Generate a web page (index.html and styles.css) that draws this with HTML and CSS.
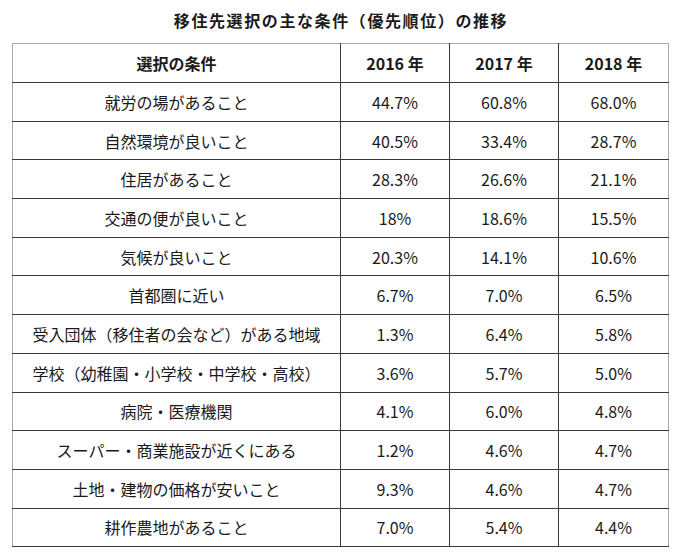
FILE: index.html
```html
<!DOCTYPE html>
<html lang="ja">
<head>
<meta charset="utf-8">
<link rel="stylesheet" href="styles.css">
</head>
<body>
<h1 class="title">移住先選択の主な条件（優先順位）の推移</h1>
<table class="tbl">
<colgroup><col class="c1"><col class="c2"><col class="c3"><col class="c4"></colgroup>
<thead>
<tr><th>選択の条件</th><th>2016 年</th><th>2017 年</th><th>2018 年</th></tr>
</thead>
<tbody>
<tr><td>就労の場があること</td><td>44.7%</td><td>60.8%</td><td>68.0%</td></tr>
<tr><td>自然環境が良いこと</td><td>40.5%</td><td>33.4%</td><td>28.7%</td></tr>
<tr><td>住居があること</td><td>28.3%</td><td>26.6%</td><td>21.1%</td></tr>
<tr><td>交通の便が良いこと</td><td>18%</td><td>18.6%</td><td>15.5%</td></tr>
<tr><td>気候が良いこと</td><td>20.3%</td><td>14.1%</td><td>10.6%</td></tr>
<tr><td>首都圏に近い</td><td>6.7%</td><td>7.0%</td><td>6.5%</td></tr>
<tr><td>受入団体（移住者の会など）がある地域</td><td>1.3%</td><td>6.4%</td><td>5.8%</td></tr>
<tr><td>学校（幼稚園・小学校・中学校・高校）</td><td>3.6%</td><td>5.7%</td><td>5.0%</td></tr>
<tr><td>病院・医療機関</td><td>4.1%</td><td>6.0%</td><td>4.8%</td></tr>
<tr><td>スーパー・商業施設が近くにある</td><td>1.2%</td><td>4.6%</td><td>4.7%</td></tr>
<tr><td>土地・建物の価格が安いこと</td><td>9.3%</td><td>4.6%</td><td>4.7%</td></tr>
<tr><td>耕作農地があること</td><td>7.0%</td><td>5.4%</td><td>4.4%</td></tr>
</tbody>
</table>
</body>
</html>
```
FILE: styles.css
```css
html, body {
  margin: 0;
  padding: 0;
  background: #fff;
}
body {
  font-family: "Noto Sans CJK JP", "Noto Sans", sans-serif;
  color: #1a1a1a;
  width: 680px;
}
.title {
  margin: 0;
  height: 43px;
  line-height: 40px;
  font-size: 16px;
  font-weight: 700;
  letter-spacing: 1.6px;
  text-align: center;
  padding-left: 2px;
}
.tbl {
  margin-left: 12px;
  width: 656px;
  border-collapse: collapse;
  table-layout: fixed;
  border-top: 1px solid #a8a8a8;
  border-left: 1px solid #a8a8a8;
  border-right: 1px solid #a8a8a8;
}
.c1 { width: 328px; }
.c2 { width: 109px; }
.c3 { width: 109px; }
.c4 { width: 110px; }
.tbl th, .tbl td {
  border: 1px solid #3a3a3a;
  text-align: center;
  padding: 0;
  font-size: 16px;
  height: 37.7px;
}
.tbl th {
  font-weight: 700;
  height: 38px;
}
.tbl tr > :first-child { border-left-color: #a8a8a8; }
.tbl tr > :last-child { border-right-color: #a8a8a8; }
.tbl thead th { border-top-color: #a8a8a8; }
```
